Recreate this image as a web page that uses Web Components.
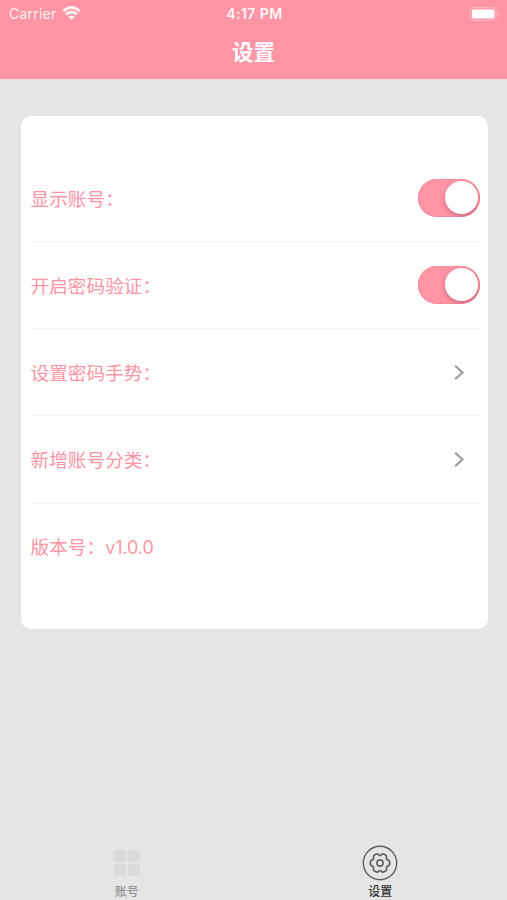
<!DOCTYPE html>
<html lang="zh-CN">
<head>
<meta charset="utf-8">
<title>设置</title>
<style>
html,body{margin:0;height:100%;background:#e5e5e5}
body{font-family:Inter,"Noto Sans CJK SC",sans-serif;--pink:#ff95a4}
</style>
</head>
<body>
<settings-app></settings-app>
<script>
const define = (name, html, setup) => customElements.define(name, class extends HTMLElement {
  constructor() {
    super();
    this.attachShadow({mode: "open"}).innerHTML = html;
    if (setup) setup(this.shadowRoot, this);
  }
});

define("status-bar", `
<style>
:host{display:grid;grid-template-columns:1fr auto 1fr;align-items:center;height:27px;padding:0 7px 0 9px;box-sizing:border-box;color:#fff;font-size:14px;line-height:27px}
.left{display:flex;align-items:center;gap:6px;letter-spacing:.22px;opacity:.88}
.time{font-weight:600;font-size:14px;letter-spacing:.45px;opacity:.92}
.right{display:flex;justify-content:flex-end}
svg{display:block}
</style>
<div class="left"><span>Carrier</span>
<svg width="19" height="15" viewBox="0 0 19 15" fill="none" stroke="#fff" stroke-width="2.7"><path d="M1.3 5.2Q9.5-2.3 17.7 5.2M4.1 8.4Q9.5 3.6 14.9 8.4"/><path d="M6.3 10.9Q9.5 8.1 12.7 10.9L9.5 14Z" fill="#fff" stroke="none"/></svg></div>
<div class="time">4:17 PM</div>
<div class="right"><svg width="31" height="14" viewBox="0 0 31 14"><rect x="1.2" y=".7" width="26" height="12.6" rx="3.5" fill="none" stroke="#fff" stroke-opacity=".3" stroke-width="1.2"/><rect x="3" y="2.5" width="22.5" height="9" rx="1.7" fill="#fff"/><path d="M28.8 4.7Q30.2 5.5 30.2 7T28.8 9.3Z" fill="#fff" fill-opacity=".3"/></svg></div>`);

define("nav-header", `
<style>
:host{display:block;height:79px;background:var(--pink);color:#fff;flex:none}
h1{margin:0;font:700 21.5px/48px "Noto Sans CJK SC",sans-serif;text-align:center}
</style><status-bar></status-bar><h1><slot></slot></h1>`);

define("toggle-switch", `
<style>
:host{display:flex;justify-content:flex-end;box-sizing:border-box;width:62px;height:38px;padding:2.5px 2px;border-radius:19px;background:var(--pink);box-shadow:inset 0 0 0 1px #f58c9c;overflow:hidden}
i{width:33.5px;height:33px;border-radius:50%;background:#fff;box-shadow:0 2px 5px rgba(130,35,65,.4)}
</style><i></i>`);

define("chevron-icon", `
<style>:host{display:block;margin-right:15.5px}svg{display:block}</style>
<svg width="11" height="17" viewBox="0 0 11 17" fill="none" stroke="#999" stroke-width="2.1"><path d="M1.2 1.7L8.5 8.5L1.2 15.3"/></svg>`);

define("setting-row", `
<style>
:host{display:flex;align-items:center;justify-content:space-between;box-sizing:border-box;height:87.25px;margin-left:10px;border-bottom:1.5px solid #f5f5f5;color:var(--pink);font:18.67px/28px "Noto Sans CJK SC",sans-serif}
:host(:last-child){border-color:transparent}
.label{white-space:pre;padding-top:.2px}
::slotted(.latin){font-family:Inter,sans-serif;font-size:18px;letter-spacing:-.1px}
</style><span class="label"><slot></slot></span><slot name="control"></slot>`);

define("settings-card", `
<style>:host{display:block;box-sizing:border-box;width:467px;height:513.5px;margin:36.5px 0 0 20.5px;padding:39px 7.5px 0 0;border-radius:10px;background:#fff;flex:none}</style><slot></slot>`);

define("tab-item", `
<style>
:host{display:flex;flex:1;flex-direction:column;align-items:center;justify-content:flex-end;color:#919191;font:500 12px/16px "Noto Sans CJK SC",sans-serif}
:host([active]){color:#333}
.icon{height:36px;display:flex;align-items:center;justify-content:center;margin-bottom:2px}
</style><div class="icon"><slot name="icon"></slot></div><span><slot></slot></span>`);

define("tab-bar", `<style>:host{display:flex;margin-top:auto;height:60px;padding-bottom:1px;box-sizing:border-box}</style><slot></slot>`);

define("grid-icon", `<style>:host{display:grid;grid-template-columns:12px 12px;grid-auto-rows:12px;gap:1.5px}i{background:#dadada;border-radius:1.5px}</style><i></i><i></i><i></i><i></i>`);

define("gear-icon", `<style>:host,svg{display:block}</style>
<svg width="36" height="36" viewBox="-18 -18 36 36" fill="none" stroke="#606060" stroke-width="1.4"><circle r="16.7"/><circle r="3.1" stroke-width="1.6"/><path class="rim" stroke-width="1.7" stroke-linejoin="round"/></svg>`,
root => {
  const points = [];
  for (let tooth = 0; tooth < 6; tooth++) {
    for (const [offset, radius] of [[-13, 9.9], [13, 9.9], [30, 7.2]]) {
      const a = (tooth * 60 + offset) * Math.PI / 180;
      points.push([radius * Math.cos(a), radius * Math.sin(a)]);
    }
  }
  const f = p => p.map(n => n.toFixed(2)).join(" ");
  const toward = (a, b, t) => [a[0] + (b[0] - a[0]) * t, a[1] + (b[1] - a[1]) * t];
  let d = "";
  points.forEach((p, i) => {
    const before = points[(i + 17) % 18], after = points[(i + 1) % 18];
    d += (i ? "L" : "M") + f(toward(p, before, .3)) + "Q" + f(p) + " " + f(toward(p, after, .3));
  });
  root.querySelector(".rim").setAttribute("d", d + "Z");
});

define("settings-app", `
<style>:host{display:flex;flex-direction:column;width:507px;height:900px;background:#e5e5e5;overflow:hidden}</style>
<nav-header>设置</nav-header>
<settings-card>
<setting-row>显示账号：<toggle-switch slot="control"></toggle-switch></setting-row>
<setting-row>开启密码验证：<toggle-switch slot="control"></toggle-switch></setting-row>
<setting-row>设置密码手势：<chevron-icon slot="control"></chevron-icon></setting-row>
<setting-row>新增账号分类：<chevron-icon slot="control"></chevron-icon></setting-row>
<setting-row>版本号：<span class="latin">v1.0.0</span></setting-row>
</settings-card>
<tab-bar>
<tab-item>账号<grid-icon slot="icon"></grid-icon></tab-item>
<tab-item active>设置<gear-icon slot="icon"></gear-icon></tab-item>
</tab-bar>`);
</script>
</body>
</html>
